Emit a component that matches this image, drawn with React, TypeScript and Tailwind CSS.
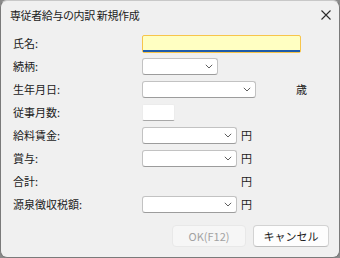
type Row = { label: string; kind: "name" | "select" | "months" | "none"; width?: number; unit?: string; unitGap?: string };

function Chevron() {
  return (
    <svg width="8" height="5" viewBox="0 0 8 5" className="shrink-0">
      <path d="M0.8 0.8 L4 4 L7.2 0.8" fill="none" stroke="#5f5f5f" strokeWidth="1" />
    </svg>
  );
}

function Select({ w }: { w: string }) {
  return (
    <div
      className={`${w} h-[17px] bg-white border border-[#c2c2c2] border-b-[#9c9c9c] rounded-[3px] flex items-center justify-end pr-[4px]`}
    >
      <Chevron />
    </div>
  );
}

export default function App() {
  const labelCls = "w-[129px] shrink-0 text-[11px] leading-none text-[#1b1b1b]";
  return (
    <div className="w-[340px] h-[258px] bg-[#8a8a8a] font-['Noto_Sans_CJK_JP',sans-serif]">
      <div className="w-full h-full bg-[#f0f0f0] rounded-[7px] border border-[#7a7a7a] border-t-[#c8c8c8] flex flex-col">
        {/* title bar */}
        <div className="h-[31px] flex items-center justify-between pl-[9px] pr-[8px] shrink-0">
          <span className="text-[11px] text-[#1b1b1b] tracking-[-0.4px] -mt-[3px]">専従者給与の内訳 新規作成</span>
          <svg width="10" height="10" viewBox="0 0 10 10" className="-mt-[4px]">
            <path d="M0.5 0.5 L9.5 9.5 M9.5 0.5 L0.5 9.5" stroke="#2b2b2b" strokeWidth="1.1" />
          </svg>
        </div>

        <div className="flex flex-col pl-[12px]">
          <div className="h-[23px] flex items-center">
            <span className={labelCls}>氏名:</span>
            <div className="w-[159px] h-[18px] bg-[#ffffc2] border border-[#f7c54b] rounded-[2px] flex flex-col justify-end">
              <div className="h-[2px] bg-[#1e5ba8]" />
            </div>
          </div>
          <div className="h-[23px] flex items-center">
            <span className={labelCls}>続柄:</span>
            <Select w="w-[76px]" />
          </div>
          <div className="h-[23px] flex items-center">
            <span className={labelCls}>生年月日:</span>
            <Select w="w-[114px]" />
            <span className="ml-[40px] text-[11px] text-[#1b1b1b] leading-none">歳</span>
          </div>
          <div className="h-[23px] flex items-center">
            <span className={labelCls}>従事月数:</span>
            <div className="w-[33px] h-[17px] bg-white rounded-[2px] border border-[#ececec] border-b-[#a8a8a8]" />
          </div>
          {["給料賃金:", "賞与:"].map((l) => (
            <div key={l} className="h-[23px] flex items-center">
              <span className={labelCls}>{l}</span>
              <Select w="w-[95px]" />
              <span className="ml-[4px] text-[11px] text-[#1b1b1b] leading-none">円</span>
            </div>
          ))}
          <div className="h-[23px] flex items-center">
            <span className={labelCls}>合計:</span>
            <div className="w-[95px] shrink-0" />
            <span className="ml-[4px] text-[11px] text-[#1b1b1b] leading-none">円</span>
          </div>
          <div className="h-[23px] flex items-center">
            <span className={labelCls}>源泉徴収税額:</span>
            <Select w="w-[95px]" />
            <span className="ml-[4px] text-[11px] text-[#1b1b1b] leading-none">円</span>
          </div>
        </div>

        <div className="flex justify-end gap-[7px] pr-[10px] mt-[9px]">
          <button className="w-[74px] h-[22px] rounded-[4px] bg-[#f6f6f6] border border-[#e8e8e8] text-[11px] text-[#a2a2a2]">
            OK(F12)
          </button>
          <button className="w-[76px] h-[22px] rounded-[4px] bg-[#fdfdfd] border border-[#d3d3d3] border-b-[#bdbdbd] text-[11px] text-[#1b1b1b]">
            キャンセル
          </button>
        </div>
      </div>
    </div>
  );
}
